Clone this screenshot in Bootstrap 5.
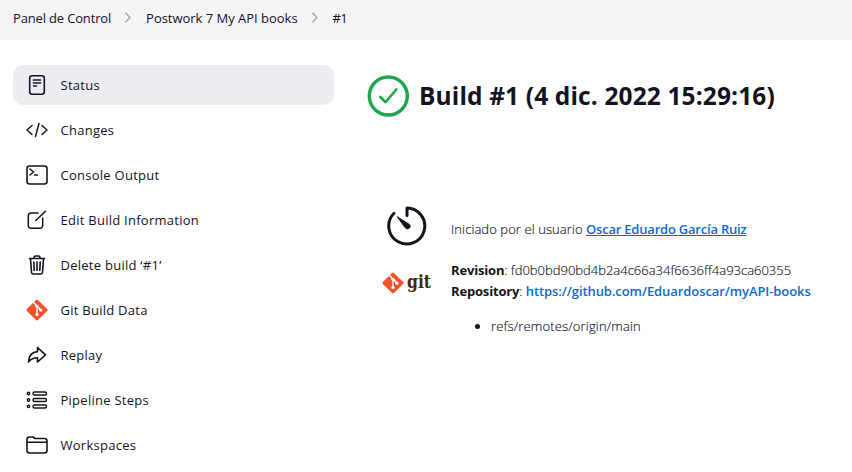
<!DOCTYPE html>
<html lang="es">
<head>
<meta charset="utf-8">
<meta name="viewport" content="width=device-width, initial-scale=1">
<title>Build #1</title>
<link href="https://cdn.jsdelivr.net/npm/bootstrap@5.3.0/dist/css/bootstrap.min.css" rel="stylesheet">
<style>
body{font-family:"Open Sans","Noto Sans",sans-serif;font-size:13px;line-height:21px;color:#14141f;background:#fff;height:472px;overflow:hidden}
.crumbs{height:40px;background:#f5f5f7;padding:0 13px 3px}
.crumbs svg{margin:0 14px 2px 13px}
.crumb-root{letter-spacing:-.16px}
.crumb-job{letter-spacing:-.02px}
.crumb-build{letter-spacing:-.8px}
.side{width:321px;margin:25px 0 0 13px;gap:5px}
.task{height:40px;border-radius:10px;padding:0 12px;gap:11.5px;font-weight:500;letter-spacing:.26px;color:#14141f;text-decoration:none}
.task.active{background:#ecedf2}
.ico{width:24px;height:24px;fill:none;stroke:#14141f;stroke-width:1.6;stroke-linecap:round;stroke-linejoin:round;flex:none}
.pane{margin:35px 0 0 33px}
.pane h1{font-size:24.5px;line-height:42px;font-weight:700;letter-spacing:.13px;margin:0 0 0 9px}
.facts{margin:87px 0 0 19px;font-weight:300;-webkit-text-stroke:.15px}
.facts a,.facts b{-webkit-text-stroke:0}
.facts a{color:#0b6ad4;font-weight:600}
.facts b{font-weight:700;letter-spacing:-.17px}
.fact-icon{width:65px;flex:none}
.cause{padding-top:15px}
.user-text{letter-spacing:.08px}
.facts .user-link{letter-spacing:-.21px}
.facts .repo-link{letter-spacing:-.08px}
.revision{margin-top:14px}
.git-logo{margin:7px 0 0 -4px}
.logo-text{font-family:"DejaVu Serif",serif;font-weight:700;font-size:18px;fill:#3e2c00;stroke:none;-webkit-text-stroke:0}
.refs{padding-left:40px;margin:14px 0 0;letter-spacing:.15px}
</style>
<script src="https://cdn.jsdelivr.net/npm/bootstrap@5.3.0/dist/js/bootstrap.bundle.min.js" defer></script>
</head>
<body>
<svg class="d-none">
<symbol id="git-mark" viewBox="0 0 22 22"><rect x="3.200" y="3.200" width="15.600" height="15.600" rx="1.300" transform="rotate(45 11 11)" fill="#f4502a"/><path d="M7.500 3.500 11 7l3.800 4M11 7v8.500" stroke="#fff" stroke-width="1.400" fill="none"/><g fill="#fff"><circle cx="11" cy="7.300" r="1.600"/><circle cx="11" cy="15.500" r="1.600"/><circle cx="14.800" cy="11.200" r="1.600"/></g></symbol>
</svg>
<nav class="crumbs d-flex align-items-center" aria-label="breadcrumb">
<span class="crumb-root">Panel de Control</span>
<svg width="8" height="12" fill="none" stroke="#a9a9b8" stroke-width="1.5"><path d="M1.500 .7 6 5.500 1.500 10.300"/></svg>
<span class="crumb-job">Postwork 7 My API books</span>
<svg width="8" height="12" fill="none" stroke="#a9a9b8" stroke-width="1.5"><path d="M1.500 .7 6 5.500 1.500 10.300"/></svg>
<span class="crumb-build">#1</span>
</nav>
<div class="d-flex">
<aside class="side d-flex flex-column flex-shrink-0">
<a class="task active d-flex align-items-center" href="#"><svg class="ico" viewBox="0 0 24 24"><rect x="4.700" y="2.800" width="14.600" height="18.400" rx="2.500"/><path d="M8.500 7h7M8.500 10h7M8.500 13h3"/></svg><span>Status</span></a>
<a class="task d-flex align-items-center" href="#"><svg class="ico" viewBox="0 0 24 24"><path d="M7 7.500 2 12l5 4.500M17 7.500l5 4.500-5 4.500M14 5.500 10.500 18.500" stroke-width="1.500"/></svg><span>Changes</span></a>
<a class="task d-flex align-items-center" href="#"><svg class="ico" viewBox="0 0 24 24"><rect x="2" y="3" width="20" height="18" rx="2.500"/><path d="m5 6 3.500 3L5 12M9.500 12h3"/></svg><span>Console Output</span></a>
<a class="task d-flex align-items-center" href="#"><svg class="ico" viewBox="0 0 24 24"><path d="M13 5H6a2.700 2.700 0 0 0-2.700 2.700V17.500A2.700 2.700 0 0 0 6 20.200h9A2.700 2.700 0 0 0 17.700 17.500v-7.500M10.800 12.500 20.500 3.200" stroke-width="1.500"/></svg><span>Edit Build Information</span></a>
<a class="task d-flex align-items-center" href="#"><svg class="ico" viewBox="0 0 24 24"><path d="m5.500 6 1 13.300a2 2 0 0 0 2 1.700h7a2 2 0 0 0 2-1.700l1-13.300M4.500 5.500h15M9 5.500V4.200A1.500 1.500 0 0 1 10.500 3h3A1.500 1.500 0 0 1 15 4.200v1.300M8.800 9l.4 8.500M12 9v8.500M15.200 9l-.4 8.500"/></svg><span>Delete build ‘#1’</span></a>
<a class="task d-flex align-items-center" href="#"><svg class="ico" viewBox="0 0 24 24"><use href="#git-mark" x="1" y="1" width="22" height="22" stroke="none"/></svg><span>Git Build Data</span></a>
<a class="task d-flex align-items-center" href="#"><svg class="ico" viewBox="0 0 24 24"><path d="M12.500 4.500 20.500 11.800 12.500 19v-4.300c-4 0-6.500 1-9 4.300.3-6 3.500-10 9-10.400z"/></svg><span>Replay</span></a>
<a class="task d-flex align-items-center" href="#"><svg class="ico" viewBox="0 0 24 24"><g stroke-width="1.400"><circle cx="3.500" cy="5.500" r="1.200"/><circle cx="3.500" cy="12" r="1.200"/><circle cx="3.500" cy="18.300" r="1.200"/><rect x="8" y="4" width="13.500" height="3" rx="1.500"/><rect x="8" y="10.500" width="13.500" height="3" rx="1.500"/><rect x="8" y="17" width="13.500" height="3" rx="1.500"/></g></svg><span>Pipeline Steps</span></a>
<a class="task d-flex align-items-center" href="#"><svg class="ico" viewBox="0 0 24 24"><path d="M2 17.500V6.500A2.500 2.500 0 0 1 4.500 4H8l2 1.500h9.500A2.500 2.500 0 0 1 22 8v9.500a2.500 2.500 0 0 1-2.500 2.500h-15A2.500 2.500 0 0 1 2 17.500zM2 9.200h20"/></svg><span>Workspaces</span></a>
</aside>
<main class="pane">
<div class="d-flex align-items-center">
<svg width="43" height="42" viewBox="0 0 43 42" fill="none" stroke="#1ea64b"><circle cx="21.300" cy="21" r="19" stroke-width="3.400"/><path d="m13.300 22 5.300 5.200L29.300 14.500" stroke-width="2.600" stroke-linecap="round" stroke-linejoin="round"/></svg>
<h1>Build #1 (4 dic. 2022 15:29:16)</h1>
</div>
<section class="facts">
<div class="d-flex">
<div class="fact-icon"><svg width="42" height="42" viewBox="0 0 42 42" fill="none" stroke="#14141f" stroke-width="3" stroke-linecap="round" stroke-linejoin="round"><path d="M21 11.500V4A18 18 0 1 1 8 9.300"/><path d="m11.500 13 12 7.500a2.500 2.500 0 0 1-4 3.500z" fill="#14141f" stroke-width="1"/></svg></div>
<div class="cause"><span class="user-text">Iniciado por el usuario</span> <a href="#" class="user-link">Oscar Eduardo García Ruiz</a></div>
</div>
<div class="revision d-flex">
<div class="fact-icon"><svg class="git-logo" width="52" height="32" viewBox="0 0 52 32"><use href="#git-mark" x="0" y="5" width="22" height="22"/><text class="logo-text" x="25" y="20.500" textLength="24" lengthAdjust="spacingAndGlyphs">git</text></svg></div>
<div><div><b>Revision</b>: <span>fd0b0bd90bd4b2a4c66a34f6636ff4a93ca60355</span></div>
<div><b>Repository</b>: <a href="#" class="repo-link text-decoration-none">https://github.com/Eduardoscar/myAPI-books</a></div>
<ul class="refs"><li>refs/remotes/origin/main</li></ul></div>
</div>
</section>
</main>
</div>
</body>
</html>
